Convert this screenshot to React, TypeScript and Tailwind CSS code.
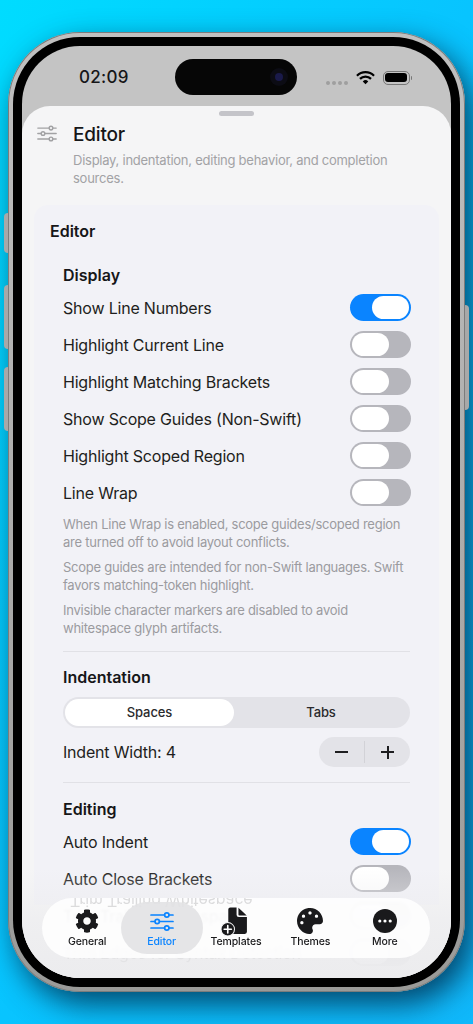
import { FaCog, FaPalette } from 'react-icons/fa'

const font = { fontFamily: 'Inter, "Noto Sans", sans-serif' }

function SlidersIcon({ className, strokeWidth = 1.7 }: { className?: string; strokeWidth?: number }) {
  return (
    <svg viewBox="0 0 24 20" fill="none" stroke="currentColor" strokeWidth={strokeWidth} strokeLinecap="round" className={className}>
      <path d="M1 3.5h13.5M19 3.5h4M1 10h4M9.5 10h13.5M1 16.5h13.5M19 16.5h4" />
      <circle cx="16.8" cy="3.5" r="2.2" />
      <circle cx="7.2" cy="10" r="2.2" />
      <circle cx="16.8" cy="16.5" r="2.2" />
    </svg>
  )
}

function Toggle({ on = false }: { on?: boolean }) {
  return on ? (
    <div className="flex h-[27px] w-[61px] shrink-0 justify-end rounded-full bg-[#0a84ff] p-[2px]">
      <div className="h-full w-[37px] rounded-full bg-white" />
    </div>
  ) : (
    <div className="flex h-[27px] w-[61px] shrink-0 rounded-full bg-[#b6b6bc] p-[2px]">
      <div className="h-full w-[37px] rounded-full bg-white" />
    </div>
  )
}

function Row({ label, on }: { label: string; on?: boolean }) {
  return (
    <div className="flex h-[37px] items-center justify-between pr-[1px] text-[16px] tracking-[-0.2px] text-[#1e1e20]">
      <span>{label}</span>
      <Toggle on={on} />
    </div>
  )
}

function Hint({ children }: { children: string }) {
  return <p className="text-[13px] leading-[18px] tracking-[-0.25px] text-[#9b9b9f]">{children}</p>
}

function SectionTitle({ children }: { children: string }) {
  return <h3 className="text-[16px] font-semibold leading-[20px] text-[#161618]">{children}</h3>
}

function TabItem({ label, active, children }: { label: string; active?: boolean; children: React.ReactNode }) {
  return (
    <div className={`flex w-[75px] flex-col items-center ${active ? 'text-[#0a84ff]' : 'text-[#1a1a1c]'}`}>
      <div className="flex h-[28px] items-center justify-center">{children}</div>
      <span className="text-[10.5px] font-medium leading-[14px] tracking-[-0.1px]">{label}</span>
    </div>
  )
}

export default function App() {
  return (
    <div style={font} className="h-[1024px] w-[473px] overflow-hidden bg-gradient-to-br from-[#00dcff] via-[#08c4ff] to-[#10b8fb] pt-[32px]">
      {/* Phone */}
      <div className="relative mx-[8px] h-[960px] w-[457px] rounded-[72px] bg-gradient-to-b from-[#c0c0c0] to-[#9a9a98] p-[5px] shadow-[inset_0_0_0_1px_#7c7c7c,8px_12px_30px_rgba(0,40,70,0.8)]">
        {/* Side buttons */}
        <div className="absolute left-[-4px] top-[181px] h-[40px] w-[4px] rounded-l-sm bg-[#a8a8a8]" />
        <div className="absolute left-[-4px] top-[253px] h-[64px] w-[4px] rounded-l-sm bg-[#a8a8a8]" />
        <div className="absolute left-[-4px] top-[335px] h-[64px] w-[4px] rounded-l-sm bg-[#a8a8a8]" />
        <div className="absolute right-[-4px] top-[273px] h-[105px] w-[4px] rounded-r-sm bg-[#a8a8a8]" />

        <div className="h-full w-full rounded-[67px] bg-black p-[9px]">
          <div className="relative h-full w-full overflow-hidden rounded-[58px] bg-[#c4c4c4]">
            {/* Status bar */}
            <div className="flex h-[60px] items-center justify-between pl-[57px] pr-[39px] pt-[3px]">
              <span className="text-[17px] font-medium tracking-[0.3px] text-[#161618]">02:09</span>
              <div className="flex items-center">
                <div className="mr-[8px] mt-[10px] flex gap-[2px]">
                  <div className="h-[4px] w-[4px] rounded-full bg-[#9f9f9f]" />
                  <div className="h-[4px] w-[4px] rounded-full bg-[#9f9f9f]" />
                  <div className="h-[4px] w-[4px] rounded-full bg-[#9f9f9f]" />
                  <div className="h-[4px] w-[4px] rounded-full bg-[#9f9f9f]" />
                </div>
                <svg viewBox="0 0 20 15" fill="none" stroke="black" strokeWidth="2.4" className="mr-[8px] h-[15px] w-[19px]">
                  <path d="M1 5.6a12.8 12.8 0 0 1 18 0" />
                  <path d="M4.2 8.9a8.2 8.2 0 0 1 11.6 0" />
                  <path d="M10 14.6 7.1 11.7a4.1 4.1 0 0 1 5.8 0z" fill="black" stroke="none" />
                </svg>
                <div className="flex items-center">
                  <div className="h-[14px] w-[27px] rounded-[5px] border border-[#777] p-[1.5px]">
                    <div className="h-full w-full rounded-[3px] bg-black" />
                  </div>
                  <div className="ml-[1px] h-[4px] w-[1.5px] rounded-r bg-[#777]" />
                </div>
              </div>
            </div>

            {/* Dynamic island */}
            <div className="absolute left-[153px] top-[13px] flex h-[36px] w-[122px] items-center justify-end rounded-full bg-[#060606] pr-[9px]">
              <div className="flex h-[18px] w-[18px] items-center justify-center rounded-full bg-[#0c0c14]">
                <div className="h-[8px] w-[8px] rounded-full bg-[#1a1a4a]" />
              </div>
            </div>

            {/* Sheet */}
            <div className="h-[880px] rounded-t-[28px] bg-[#f5f5f6]">
              <div className="mx-auto h-[5px] w-[35px] translate-y-[5px] rounded-full bg-[#c4c4c9]" />
              <div className="flex pl-[15px] pr-[30px] pt-[11px]">
                <SlidersIcon className="mt-[3px] h-[17px] w-[20px] shrink-0 text-[#a2a2a4]" />
                <div className="ml-[16px]">
                  <h1 className="text-[19px] font-medium leading-[26px] tracking-[-0.2px] text-[#161618]">Editor</h1>
                  <p className="mt-[3px] text-[13px] leading-[18px] tracking-[-0.25px] text-[#a2a2a5]">
                    Display, indentation, editing behavior, and completion sources.
                  </p>
                </div>
              </div>

              {/* Card */}
              <div className="mx-[12px] mt-[18px] h-[700px] rounded-t-[14px] bg-[#f2f2f7] pl-[16px] pr-[27px] pt-[16px]">
                <h2 className="text-[16px] font-semibold leading-[20px] text-[#161618]">Editor</h2>
                <div className="ml-[13px] mt-[24px]">
                  <SectionTitle>Display</SectionTitle>
                  <div className="mt-[4px]">
                    <Row label="Show Line Numbers" on />
                    <Row label="Highlight Current Line" />
                    <Row label="Highlight Matching Brackets" />
                    <Row label="Show Scope Guides (Non-Swift)" />
                    <Row label="Highlight Scoped Region" />
                    <Row label="Line Wrap" />
                  </div>
                  <div className="mt-[4px] flex flex-col gap-[7px]">
                    <Hint>When Line Wrap is enabled, scope guides/scoped region are turned off to avoid layout conflicts.</Hint>
                    <Hint>Scope guides are intended for non-Swift languages. Swift favors matching-token highlight.</Hint>
                    <Hint>Invisible character markers are disabled to avoid whitespace glyph artifacts.</Hint>
                  </div>
                  <div className="mr-[2px] mt-[14px] h-px bg-[#e1e1e6]" />
                  <div className="mt-[15px]">
                    <SectionTitle>Indentation</SectionTitle>
                  </div>
                  <div className="mr-[2px] mt-[10px] flex h-[31px] rounded-full bg-[#e3e3e8] p-[2px] text-[13px] font-medium tracking-[-0.1px] text-[#2a2a2c]">
                    <div className="flex w-[169px] items-center justify-center rounded-full bg-white">Spaces</div>
                    <div className="flex flex-1 items-center justify-center">Tabs</div>
                  </div>
                  <div className="mr-[2px] mt-[9px] flex h-[30px] items-center justify-between text-[16px] tracking-[-0.2px] text-[#1e1e20]">
                    <span>Indent Width: 4</span>
                    <div className="flex h-[30px] w-[91px] items-center rounded-full bg-[#e3e3e8]">
                      <div className="flex h-full flex-1 items-center justify-center">
                        <div className="h-[2px] w-[13px] bg-[#1e1e20]" />
                      </div>
                      <div className="h-[22px] w-px bg-[#d2d2d7]" />
                      <div className="relative flex h-full flex-1 items-center justify-center">
                        <div className="h-[2px] w-[13px] bg-[#1e1e20]" />
                        <div className="absolute h-[13px] w-[2px] bg-[#1e1e20]" />
                      </div>
                    </div>
                  </div>
                  <div className="mr-[2px] mt-[15px] h-px bg-[#e1e1e6]" />
                  <div className="mt-[16px]">
                    <SectionTitle>Editing</SectionTitle>
                  </div>
                  <div className="mt-[4px]">
                    <Row label="Auto Indent" on />
                    <Row label="Auto Close Brackets" />
                    {/* These two sit behind the tab bar, so they read faintly */}
                    <div className="opacity-50 blur-[0.5px]">
                      <Row label="Trim Trailing Whitespace" />
                      <Row label="Trim Edges for Syntax Detection" />
                    </div>
                  </div>
                </div>
              </div>
            </div>

            {/* Bottom fade */}
            <div className="pointer-events-none absolute bottom-0 left-0 right-0 h-[110px] bg-gradient-to-b from-[#ececee]/0 via-[#ececee]/70 to-[#ececee]" />

            {/* Tab bar */}
            <div className="absolute bottom-[20px] left-[20px] flex h-[60px] w-[388px] items-center justify-between overflow-hidden rounded-full bg-white/85 px-[8px] backdrop-blur-[1px]">
              <span className="absolute left-[28px] top-[-9px] -scale-y-100 text-[16px] tracking-[-0.2px] text-[#1e1e20] opacity-15 blur-[0.5px]">
                Trim Trailing Whitespace
              </span>
              <div className="absolute left-[79px] top-[4px] h-[52px] w-[82px] rounded-full bg-[#e2e2e4]/90" />
              <div className="relative flex w-full items-center justify-between">
                <TabItem label="General">
                  <FaCog className="h-[24px] w-[24px]" />
                </TabItem>
                <TabItem label="Editor" active>
                  <SlidersIcon className="h-[21px] w-[24px]" />
                </TabItem>
                <TabItem label="Templates">
                  <svg viewBox="0 0 26 28" className="h-[29px] w-[27px] -translate-x-[2px]" fill="currentColor">
                    <path d="M7 2.5a2 2 0 0 1 2-2h6v7a2.2 2.2 0 0 0 2.2 2.2H25V24a2 2 0 0 1-2 2H9a2 2 0 0 1-2-2z" />
                    <path d="M16.8.8 24.8 8.2h-7.1a.9.9 0 0 1-.9-.9z" />
                    <circle cx="6.5" cy="21.5" r="6.5" stroke="#f4f4f5" strokeWidth="1" />
                    <path d="M6.5 18v7M3 21.5h7" stroke="#fff" strokeWidth="1.6" strokeLinecap="round" />
                  </svg>
                </TabItem>
                <TabItem label="Themes">
                  <FaPalette className="h-[26px] w-[28px]" />
                </TabItem>
                <TabItem label="More">
                  <svg viewBox="0 0 24 24" className="h-[24px] w-[24px]" fill="currentColor">
                    <circle cx="12" cy="12" r="12" />
                    <circle cx="6.8" cy="12" r="1.6" fill="#fff" />
                    <circle cx="12" cy="12" r="1.6" fill="#fff" />
                    <circle cx="17.2" cy="12" r="1.6" fill="#fff" />
                  </svg>
                </TabItem>
              </div>
            </div>
          </div>
        </div>
      </div>
    </div>
  )
}
